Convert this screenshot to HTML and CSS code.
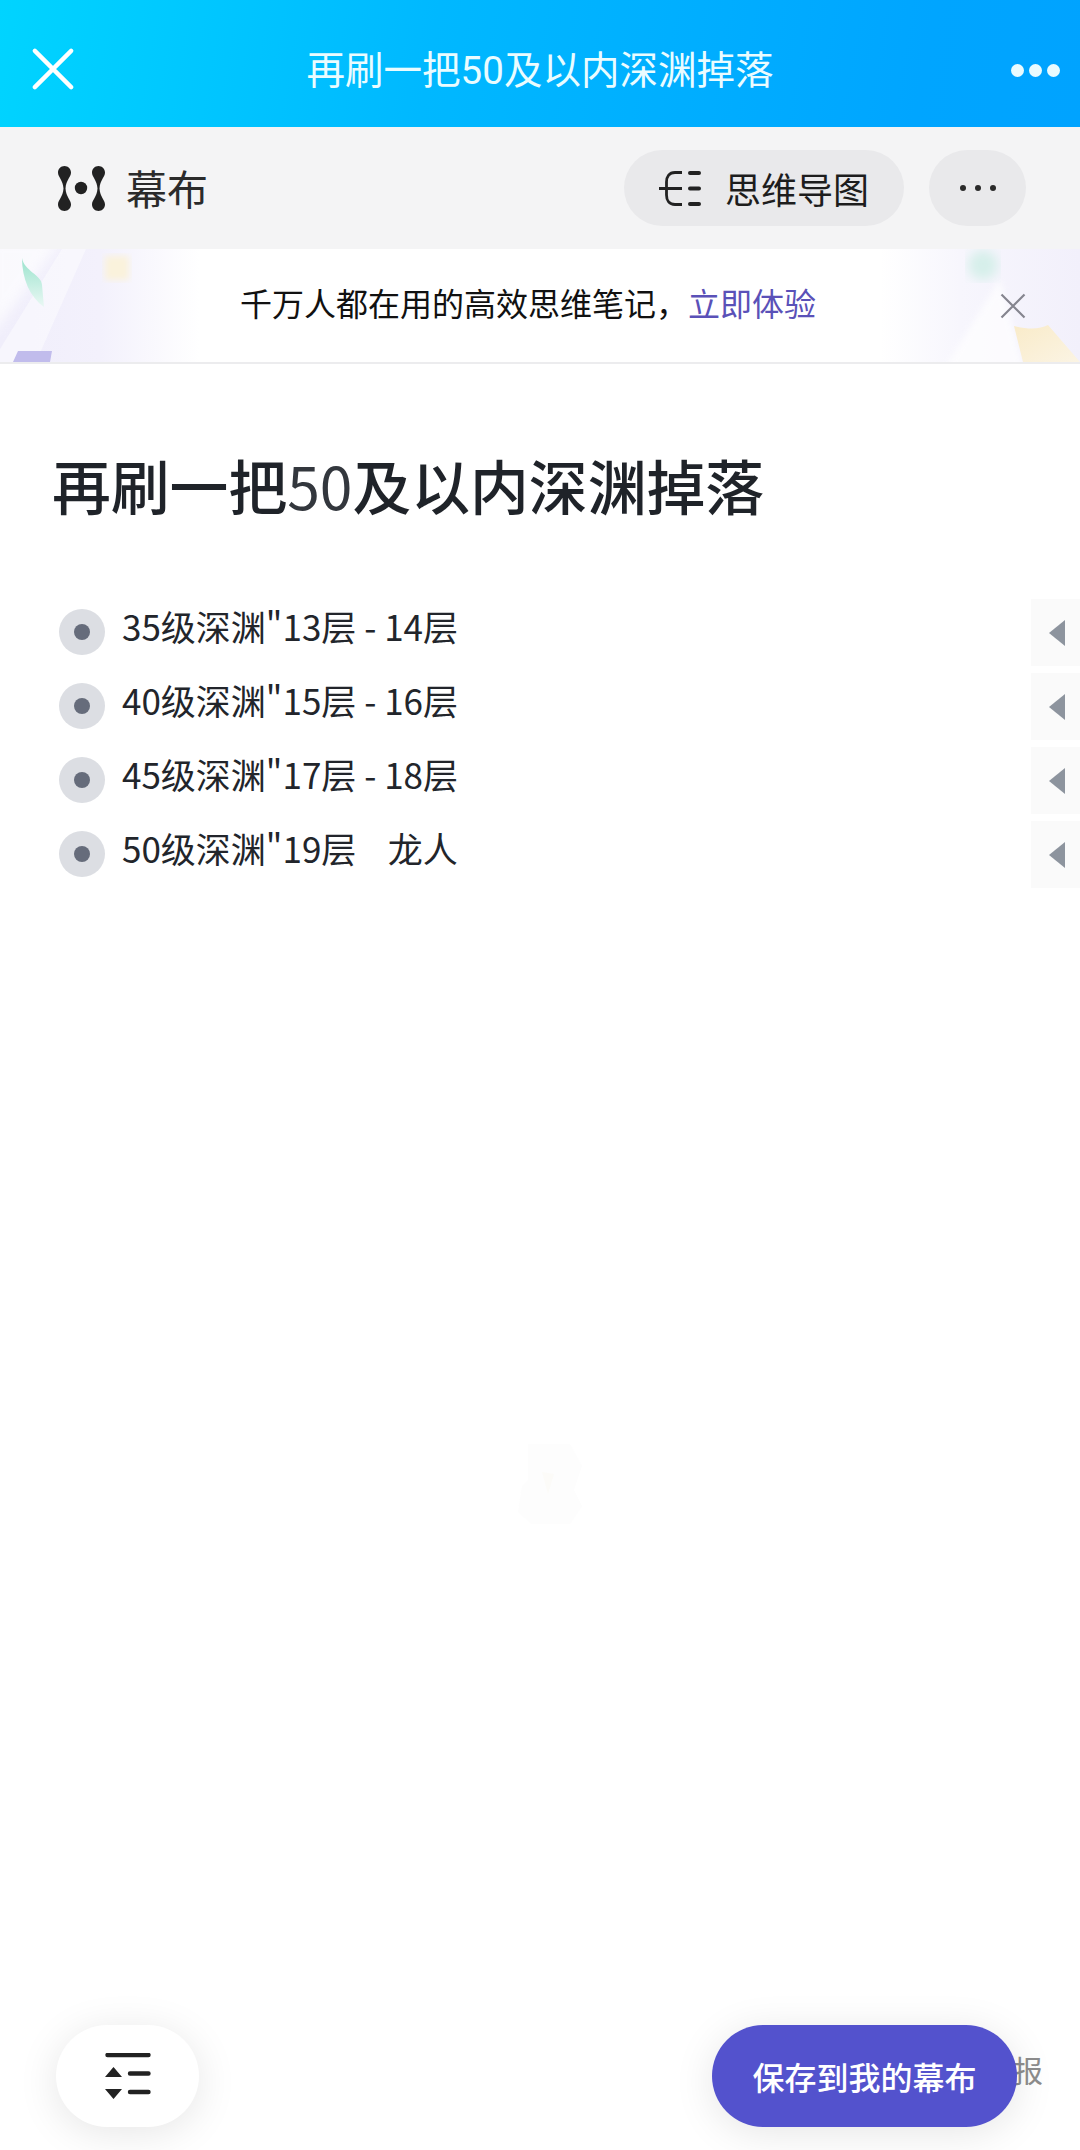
FILE: index.html
```html
<!DOCTYPE html>
<html lang="zh-CN">
<head>
<meta charset="utf-8">
<title>再刷一把50及以内深渊掉落</title>
<link rel="stylesheet" href="styles.css">
</head>
<body>
<div class="page">
  <header class="appbar">
    <svg class="appbar-close" viewBox="0 0 44 44"><path d="M3 3L41 41M41 3L3 41" fill="none" stroke="#fff" stroke-width="4.500" stroke-linecap="round"/></svg>
    <div class="appbar-title">再刷一把50及以内深渊掉落</div>
    <div class="appbar-dots"><i></i><i></i><i></i></div>
  </header>

  <nav class="topbar">
    <div class="brand">
      <svg class="brand-logo" viewBox="0 0 47 45">
        <path d="M6.500 0C10 0 13 2.900 13 6.500C13 11 8 14 7.500 22.500C8 31 13 34 13 38.500C13 42.100 10 45 6.500 45C2.900 45 0 42.100 0 38.500C0 34 5 31 5.500 22.500C5 14 0 11 0 6.500C0 2.900 2.900 0 6.500 0Z" fill="#222"/>
        <path d="M40.500 0C44 0 47 2.900 47 6.500C47 11 42 14 41.500 22.500C42 31 47 34 47 38.500C47 42.100 44 45 40.500 45C36.900 45 34 42.100 34 38.500C34 34 39 31 39.500 22.500C39 14 34 11 34 6.500C34 2.900 36.900 0 40.500 0Z" fill="#222"/>
        <circle cx="23" cy="22" r="6.200" fill="#222"/>
      </svg>
      <span class="brand-name">幕布</span>
    </div>
    <div class="topbar-actions">
      <div class="pill pill-mind">
        <svg class="mind-icon" viewBox="0 0 42 35"><path d="M0 17.500H23M23 1.500H16C10 1.500 7.500 6 7.500 11V24C7.500 29 10 33.500 16 33.500H23" fill="none" stroke="#222" stroke-width="2.800"/><path d="M31 2H40M31 17.500H40M31 33H40" fill="none" stroke="#222" stroke-width="4" stroke-linecap="round"/></svg>
        <span>思维导图</span>
      </div>
      <div class="pill pill-more"><i></i><i></i><i></i></div>
    </div>
  </nav>

  <section class="banner">
    <svg class="banner-art" viewBox="0 0 1080 113" preserveAspectRatio="none">
      <defs>
        <linearGradient id="fadeL" x1="0" x2="1" y1="0" y2="0"><stop offset="0" stop-color="#f0eefb"/><stop offset=".5" stop-color="#f3f1fc"/><stop offset="1" stop-color="#fff"/></linearGradient>
        <linearGradient id="fadeR" x1="1" x2="0" y1="0" y2="0"><stop offset="0" stop-color="#f2f0fb"/><stop offset=".6" stop-color="#f7f6fd"/><stop offset="1" stop-color="#fff"/></linearGradient>
        <linearGradient id="leaf" x1="0" x2="0" y1="0" y2="1"><stop offset="0" stop-color="#9be3cd"/><stop offset="1" stop-color="#eaf8f4"/></linearGradient>
        <linearGradient id="gold" x1="0" x2="1" y1="0" y2="1"><stop offset="0" stop-color="#f9ebc9"/><stop offset="1" stop-color="#fbf4e4"/></linearGradient>
        <filter id="soft"><feGaussianBlur stdDeviation="3"/></filter>
        <filter id="softer"><feGaussianBlur stdDeviation="6"/></filter>
      </defs>
      <rect x="0" width="200" height="113" fill="url(#fadeL)"/>
      <path d="M62 0H86L36 113H0V100Z" fill="#fff" opacity=".45"/>
      <path d="M-10 -10H62L-10 90Z" fill="#fff" opacity=".7" filter="url(#softer)"/>
      <path d="M22 9C24 22 42 26 42 36L44 58C30 48 22 30 22 9Z" fill="url(#leaf)"/>
      <rect x="105" y="7" width="24" height="24" fill="#faf2dc" filter="url(#soft)"/>
      <path d="M18 102H52L50 113H13Z" fill="#c1bcec"/>
      <rect x="880" width="200" height="113" fill="url(#fadeR)"/>
      <path d="M1000 30L1024 120H944Z" fill="#fff" opacity=".7" filter="url(#soft)"/>
      <ellipse cx="983" cy="16" rx="15" ry="15" fill="#d6efea" filter="url(#softer)"/>
      <path d="M1014 77C1030 81 1040 80 1048 76L1080 113H1023Z" fill="url(#gold)"/>
    </svg>
    <p class="banner-text">千万人都在用的高效思维笔记，<a class="banner-link">立即体验</a></p>
    <svg class="banner-close" viewBox="0 0 26 26"><path d="M1.500 1.500L24.500 24.500M24.500 1.500L1.500 24.500" fill="none" stroke="#85858f" stroke-width="2.200"/></svg>
  </section>

  <main class="doc">
    <h1 class="doc-title">再刷一把<span class="doc-num">50</span>及以内深渊掉落</h1>
    <ul class="outline">
      <li class="node"><span class="bullet"><i></i></span><span class="node-text">35级深渊"13层 - 14层</span><span class="fold"></span></li>
      <li class="node"><span class="bullet"><i></i></span><span class="node-text">40级深渊"15层 - 16层</span><span class="fold"></span></li>
      <li class="node"><span class="bullet"><i></i></span><span class="node-text">45级深渊"17层 - 18层</span><span class="fold"></span></li>
      <li class="node"><span class="bullet"><i></i></span><span class="node-text">50级深渊"19层&nbsp;&nbsp;&nbsp; 龙人</span><span class="fold"></span></li>
    </ul>
  </main>

  <svg class="watermark" viewBox="0 0 80 96"><path d="M18 8H60L72 30 64 54 72 70 60 88H22L8 76 12 50 18 44Z" fill="#fdfdfd"/><path d="M32 36L44 38 38 58Z" fill="#fcfbf8"/></svg>

  <span class="report">报</span>
  <div class="fab fab-toggle">
    <svg class="toggle-icon" viewBox="0 0 46 46"><path d="M2.500 2H43.500M25 20.500H43.500M25 39H43.500" fill="none" stroke="#222" stroke-width="4.400" stroke-linecap="round"/><path d="M0 24L8.500 14 17 24Z M0 36H17L8.500 46Z" fill="#222"/></svg>
  </div>
  <div class="fab fab-save">保存到我的幕布</div>
</div>
</body>
</html>
```

FILE: styles.css
```css
* { box-sizing: border-box; }
html, body { margin: 0; padding: 0; background: #fff; }
body { font-family: "Noto Sans CJK SC", "Noto Sans", sans-serif; color: #1f2329; }
.page { position: relative; width: 1080px; height: 2150px; overflow: hidden; display: flex; flex-direction: column; background: #fff; }

.appbar { height: 127px; flex: none; display: flex; align-items: center; justify-content: space-between; padding: 0 20px 0 32px; background: linear-gradient(100deg, #00d4ff 0%, #00b8ff 40%, #00a5ff 85%, #00a3ff 100%); position: relative; }
.appbar-close { width: 42px; height: 42px; margin-top: 10px; }
.appbar-title { position: absolute; left: 0; right: 0; top: 52px; text-align: center; font: 400 38.500px/1 Roboto, "Noto Sans CJK SC", sans-serif; color: #eafcff; }
.appbar-dots { display: flex; gap: 5px; margin-top: 13px; }
.appbar-dots i { width: 13px; height: 13px; border-radius: 50%; background: #e9fbff; }

.topbar { height: 122px; flex: none; display: flex; align-items: center; justify-content: space-between; padding: 0 54px 0 58px; background: #f4f4f5; }
.brand { display: flex; align-items: center; gap: 21px; }
.brand-logo { width: 47px; height: 45px; }
.brand-name { font-size: 41px; line-height: 46px; color: #2b2b2b; margin-top: -2px; }
.topbar-actions { display: flex; gap: 25px; }
.pill { height: 76px; border-radius: 38px; background: #e9e9eb; display: flex; align-items: center; justify-content: center; }
.pill-mind { width: 280px; gap: 24px; font-size: 36px; color: #1d1d1d; }
.mind-icon { width: 42px; height: 35px; }
.pill-more { width: 97px; gap: 9px; }
.pill-more i { width: 6px; height: 6px; border-radius: 50%; background: #2a2a2a; }

.banner { position: relative; height: 115px; flex: none; display: flex; align-items: center; justify-content: center; padding: 0 24px 8px 0; border-bottom: 2px solid #ececee; background: #fff; }
.banner-art { position: absolute; left: 0; top: 0; width: 100%; height: 113px; }
.banner-text { position: relative; margin: 0; font-size: 32px; line-height: 46px; color: #111; white-space: nowrap; }
.banner-link { color: #5a51b8; }
.banner-close { position: absolute; left: 1000px; top: 44px; width: 26px; height: 26px; }

.doc { flex: none; padding: 79px 0 0; }
.doc-title { margin: 0 0 0 52px; font-size: 58.800px; line-height: 84px; font-weight: 500; color: #1f2329; }
.doc-num { font-weight: 400; color: #33373d; }
.outline { list-style: none; margin: 71px 0 0; padding: 0; display: flex; flex-direction: column; gap: 7px; }
.node { height: 67px; display: flex; align-items: center; padding-left: 59px; }
.bullet { width: 46px; height: 46px; border-radius: 50%; background: #dcdee3; display: flex; align-items: center; justify-content: center; flex: none; }
.bullet i { width: 16px; height: 16px; border-radius: 50%; background: #666c7b; }
.node-text { margin: 0 0 12px 17px; font-size: 35px; line-height: 50px; color: #22252b; white-space: pre; flex: 1; }
.fold { flex: none; width: 49px; height: 67px; margin-top: 1px; background: #fafafa; position: relative; }
.fold::before { content: ""; position: absolute; left: 18px; top: 21px; border-style: solid; border-width: 13px 16px 13px 0; border-color: transparent #8d949e transparent transparent; }

.watermark { position: absolute; left: 510px; top: 1436px; width: 80px; height: 96px; }

.fab { position: absolute; top: 2025px; height: 102px; border-radius: 51px; display: flex; align-items: center; justify-content: center; box-shadow: 0 6px 40px rgba(0, 0, 0, .1); }
.fab-toggle { left: 56px; width: 143px; background: #fff; }
.toggle-icon { width: 46px; height: 46px; }
.fab-save { left: 712px; width: 305px; background: #5352cd; color: #fff; font-size: 32px; font-weight: 500; }
.report { position: absolute; left: 1013px; top: 2047px; font-size: 30px; line-height: 44px; color: #8d8d8d; }
```
